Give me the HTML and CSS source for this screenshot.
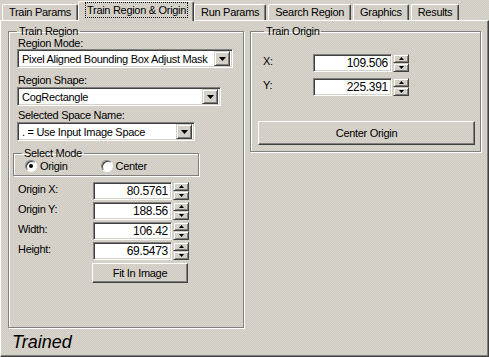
FILE: index.html
```html
<!DOCTYPE html>
<html lang="en">
<head>
  <meta charset="UTF-8">
  <title>Train Region &amp; Origin</title>
  <link rel="stylesheet" href="styles.css">
</head>
<body>
  <div class="window">

    <!-- Tab strip -->
    <div class="tabs">
      <div class="tab">Train Params</div>
      <div class="tab active"><span class="focus">Train Region &amp; Origin</span></div>
      <div class="tab">Run Params</div>
      <div class="tab">Search Region</div>
      <div class="tab">Graphics</div>
      <div class="tab">Results</div>
    </div>

    <div class="panel">
      <div class="columns">

        <!-- Train Region -->
        <fieldset class="group region">
          <legend>Train Region</legend>

          <div class="field-label first">Region Mode:</div>
          <div class="combo wide">
            <span class="combo-text">Pixel Aligned Bounding Box Adjust Mask</span>
            <span class="combo-btn"><svg width="7" height="4" viewBox="0 0 7 4"><path d="M0 0h7L3.5 4z"/></svg></span>
          </div>

          <div class="field-label">Region Shape:</div>
          <div class="combo medium">
            <span class="combo-text">CogRectangle</span>
            <span class="combo-btn"><svg width="7" height="4" viewBox="0 0 7 4"><path d="M0 0h7L3.5 4z"/></svg></span>
          </div>

          <div class="field-label tight">Selected Space Name:</div>
          <div class="combo narrow">
            <span class="combo-text">. = Use Input Image Space</span>
            <span class="combo-btn"><svg width="7" height="4" viewBox="0 0 7 4"><path d="M0 0h7L3.5 4z"/></svg></span>
          </div>

          <fieldset class="group mode">
            <legend>Select Mode</legend>
            <div class="radios">
              <label class="radio-item"><span class="radio checked"></span>Origin</label>
              <label class="radio-item"><span class="radio"></span>Center</label>
            </div>
          </fieldset>

          <div class="num-rows">
            <div class="num-row">
              <span class="num-label">Origin X:</span>
              <span class="num-input">80.5761</span>
              <span class="spin"><span class="spin-btn"><svg width="5" height="3" viewBox="0 0 5 3"><path d="M2.5 0L5 3H0z"/></svg></span><span class="spin-btn"><svg width="5" height="3" viewBox="0 0 5 3"><path d="M0 0h5L2.5 3z"/></svg></span></span>
            </div>
            <div class="num-row">
              <span class="num-label">Origin Y:</span>
              <span class="num-input">188.56</span>
              <span class="spin"><span class="spin-btn"><svg width="5" height="3" viewBox="0 0 5 3"><path d="M2.5 0L5 3H0z"/></svg></span><span class="spin-btn"><svg width="5" height="3" viewBox="0 0 5 3"><path d="M0 0h5L2.5 3z"/></svg></span></span>
            </div>
            <div class="num-row">
              <span class="num-label">Width:</span>
              <span class="num-input">106.42</span>
              <span class="spin"><span class="spin-btn"><svg width="5" height="3" viewBox="0 0 5 3"><path d="M2.5 0L5 3H0z"/></svg></span><span class="spin-btn"><svg width="5" height="3" viewBox="0 0 5 3"><path d="M0 0h5L2.5 3z"/></svg></span></span>
            </div>
            <div class="num-row">
              <span class="num-label">Height:</span>
              <span class="num-input">69.5473</span>
              <span class="spin"><span class="spin-btn"><svg width="5" height="3" viewBox="0 0 5 3"><path d="M2.5 0L5 3H0z"/></svg></span><span class="spin-btn"><svg width="5" height="3" viewBox="0 0 5 3"><path d="M0 0h5L2.5 3z"/></svg></span></span>
            </div>
            <button class="btn fit">Fit In Image</button>
          </div>
        </fieldset>

        <!-- Train Origin -->
        <fieldset class="group origin">
          <legend>Train Origin</legend>
          <div class="origin-rows">
            <div class="num-row">
              <span class="num-label short">X:</span>
              <span class="num-input">109.506</span>
              <span class="spin"><span class="spin-btn"><svg width="5" height="3" viewBox="0 0 5 3"><path d="M2.5 0L5 3H0z"/></svg></span><span class="spin-btn"><svg width="5" height="3" viewBox="0 0 5 3"><path d="M0 0h5L2.5 3z"/></svg></span></span>
            </div>
            <div class="num-row">
              <span class="num-label short">Y:</span>
              <span class="num-input">225.391</span>
              <span class="spin"><span class="spin-btn"><svg width="5" height="3" viewBox="0 0 5 3"><path d="M2.5 0L5 3H0z"/></svg></span><span class="spin-btn"><svg width="5" height="3" viewBox="0 0 5 3"><path d="M0 0h5L2.5 3z"/></svg></span></span>
            </div>
          </div>
          <button class="btn center">Center Origin</button>
        </fieldset>

      </div>

      <div class="status">Trained</div>
    </div>
  </div>
</body>
</html>
```

FILE: styles.css
```css
body {
  margin: 0;
  font-family: 'Liberation Sans', Arial, sans-serif;
  font-size: 11px;
  letter-spacing: -0.3px;
  color: #000;
}

.window {
  width: 489px;
  height: 357px;
  display: flex;
  flex-direction: column;
  background-color: #d4d0c8;
  background-image: repeating-conic-gradient(#d0ccc4 0 25%, #d8d4cc 0 50%);
  background-size: 2px 2px;
}

/* Tabs */
.tabs {
  display: flex;
  align-items: flex-end;
  height: 20px;
  padding-left: 2px;
  position: relative;
  z-index: 2;
}

.tab {
  height: 16px;
  line-height: 15px;
  padding: 0 6px;
  margin-right: 2px;
  border: 1px solid;
  border-bottom: none;
  border-color: #fff #404040 transparent #fff;
  border-radius: 2px 2px 0 0;
  box-shadow: inset -1px 0 #808080;
  box-sizing: border-box;
  white-space: nowrap;
}

.tab.active {
  height: 20px;
  margin: 0 0 -1px -2px;
  padding: 1px 6px 0 7px;
  background-color: #d4d0c8;
  background-image: repeating-conic-gradient(#d0ccc4 0 25%, #d8d4cc 0 50%);
  background-size: 2px 2px;
}

.focus {
  display: inline-block;
  line-height: 14px;
  padding: 0 1px;
  outline: 1px dotted #000;
}

/* Panel */
.panel {
  flex: 1;
  display: flex;
  flex-direction: column;
  border: 1px solid;
  border-color: #fff #404040 #404040 #fff;
  box-shadow: inset -1px -1px #808080;
  padding: 4px 0 0 7px;
}

.columns {
  display: flex;
  align-items: flex-start;
  gap: 6px;
}

/* Group boxes */
.group {
  margin: 0;
  padding: 0;
  border: 1px solid #808080;
  box-shadow: 1px 1px 0 #fff, inset 1px 1px 0 #fff;
  min-width: 0;
  box-sizing: border-box;
}

.group legend {
  padding: 0 2px;
  margin-left: 6px;
  line-height: 12px;
}

.region {
  width: 236px;
  height: 303px;
  padding: 0 8px;
}

.region legend {
  margin-left: 0;
}

.origin {
  width: 231px;
  padding: 0 6px 6px 7px;
}

.field-label {
  line-height: 13px;
  margin-top: 6px;
  padding-left: 1px;
}

.field-label.first {
  margin-top: 0;
  line-height: 12px;
}

.field-label.tight {
  margin-top: 3px;
}

/* Sunken field */
.combo,
.num-input {
  background: #fff;
  border: 1px solid;
  border-color: #808080 #fff #fff #808080;
  box-shadow: inset 1px 1px #404040, inset -1px -1px #d4d0c8;
  box-sizing: border-box;
}

.combo {
  display: flex;
  align-items: center;
  height: 19px;
  padding: 1px 2px;
}

.combo.wide { width: 216px; }
.combo.medium { width: 204px; }
.combo.narrow { width: 178px; }

.combo-text {
  flex: 1;
  padding-left: 2px;
  white-space: nowrap;
  overflow: hidden;
}

.combo-btn {
  width: 16px;
  height: 15px;
  display: flex;
  align-items: center;
  justify-content: center;
  background: #d4d0c8;
  border: 1px solid;
  border-color: #d4d0c8 #404040 #404040 #d4d0c8;
  box-shadow: inset 1px 1px #fff, inset -1px -1px #808080;
  box-sizing: border-box;
}

/* Select mode */
.mode {
  width: 186px;
  height: 29px;
  margin: 6px 0 0 -4px;
  padding: 0 8px 0 11px;
}

.mode legend {
  margin-left: -3px;
}

.radios {
  display: flex;
  gap: 33px;
  padding-top: 1px;
}

.radio-item {
  display: flex;
  align-items: center;
  gap: 3px;
}

.radio {
  width: 12px;
  height: 12px;
  border-radius: 50%;
  background: #fff;
  border: 1px solid;
  border-color: #808080 #fff #fff #808080;
  box-shadow: inset 1px 1px #404040;
  box-sizing: border-box;
  display: flex;
  align-items: center;
  justify-content: center;
}

.radio.checked::after {
  content: "";
  width: 4px;
  height: 4px;
  border-radius: 50%;
  background: #000;
}

/* Numeric rows */
.num-rows {
  display: flex;
  flex-direction: column;
  gap: 2px;
  margin-top: 6px;
}

.num-row {
  display: flex;
  align-items: center;
  height: 18px;
}

.num-label {
  width: 75px;
  padding-left: 1px;
  align-self: flex-start;
  line-height: 15px;
}

.num-label.short {
  width: 50px;
  padding-left: 5px;
}

.num-input {
  width: 79px;
  height: 18px;
  line-height: 16px;
  padding-right: 3px;
  text-align: right;
  font-size: 12px;
}

.spin {
  display: flex;
  flex-direction: column;
  width: 16px;
  height: 18px;
  margin-left: 1px;
}

.spin-btn {
  flex: 1;
  display: flex;
  align-items: center;
  justify-content: center;
  background: #d4d0c8;
  border: 1px solid;
  border-color: #d4d0c8 #404040 #404040 #d4d0c8;
  box-shadow: inset 1px 1px #fff, inset -1px -1px #808080;
}

/* Buttons */
.btn {
  font-family: inherit;
  font-size: 11px;
  letter-spacing: -0.3px;
  color: #000;
  background: transparent;
  border: 1px solid;
  border-color: #fff #404040 #404040 #fff;
  box-shadow: inset -1px -1px #808080, inset 1px 1px #d4d0c8;
  padding: 0;
  box-sizing: border-box;
}

.fit {
  width: 96px;
  height: 20px;
  margin: 1px 0 0 75px;
}

.origin-rows {
  display: flex;
  flex-direction: column;
  gap: 6px;
  margin-top: 17px;
}

.center {
  display: block;
  width: 217px;
  height: 24px;
  margin-top: 25px;
}

/* Status line */
.status {
  margin-top: 3px;
  padding-left: 4px;
  font-size: 18px;
  font-style: italic;
  letter-spacing: 0;
  line-height: 22px;
}
```
